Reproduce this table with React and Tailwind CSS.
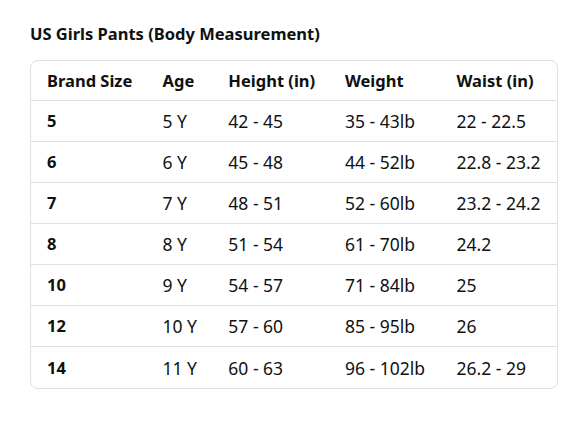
import React from "react";

const rows = [
  ["5", "5 Y", "42 - 45", "35 - 43lb", "22 - 22.5"],
  ["6", "6 Y", "45 - 48", "44 - 52lb", "22.8 - 23.2"],
  ["7", "7 Y", "48 - 51", "52 - 60lb", "23.2 - 24.2"],
  ["8", "8 Y", "51 - 54", "61 - 70lb", "24.2"],
  ["10", "9 Y", "54 - 57", "71 - 84lb", "25"],
  ["12", "10 Y", "57 - 60", "85 - 95lb", "26"],
  ["14", "11 Y", "60 - 63", "96 - 102lb", "26.2 - 29"],
];

const headers = ["Brand Size", "Age", "Height (in)", "Weight", "Waist (in)"];
const widths = ["w-[116px]", "w-[66px]", "w-[117px]", "w-[112px]", "w-[117px]"];

export default function App() {
  return (
    <div
      className="w-[588px] h-[441px] bg-white text-[#0f1111] pt-[23px] pl-[30px]"
      style={{ fontFamily: '"Noto Sans", "Open Sans", sans-serif' }}
    >
      <h2 className="text-[16.5px] font-bold leading-[22px]">
        US Girls Pants (Body Measurement)
      </h2>
      <div className="mt-[15px] w-[528px] border border-[#dfe1e1] rounded-[8px] overflow-hidden">
        <div className="flex h-[40px] items-center border-b border-[#dfe1e1]">
          {headers.map((h, i) => (
            <div key={i} className={`${widths[i]} pl-[16px] font-bold text-[16.5px] leading-[20px]`}>
              {h}
            </div>
          ))}
        </div>
        {rows.map((r, ri) => (
          <div
            key={ri}
            className={`flex h-[41px] items-center ${ri < rows.length - 1 ? "border-b border-[#dfe1e1]" : ""}`}
          >
            {r.map((c, i) => (
              <div
                key={i}
                className={`${widths[i]} pl-[16px] leading-[20px] ${i === 0 ? "font-bold text-[16.5px]" : "text-[17.5px]"}`}
              >
                {c}
              </div>
            ))}
          </div>
        ))}
      </div>
    </div>
  );
}
